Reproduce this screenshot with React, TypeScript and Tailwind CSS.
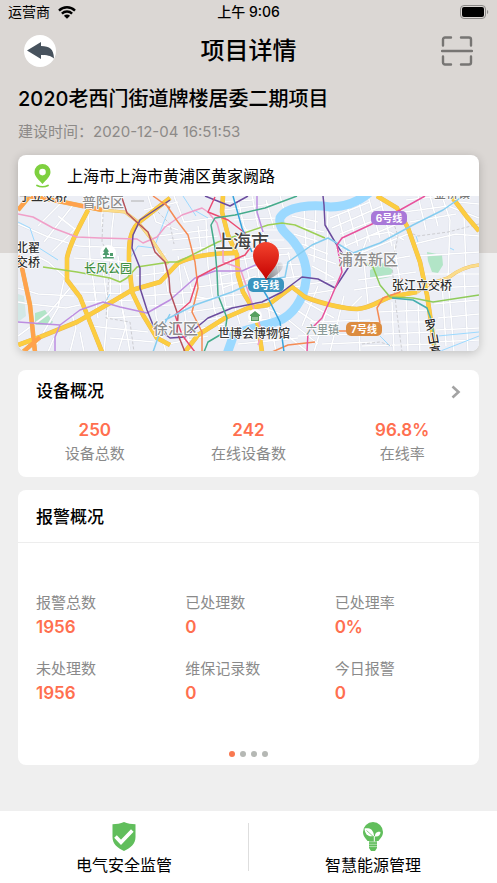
import { useState } from 'react';

interface Stat {
  label: string;
  value: string;
}

const deviceStats: Stat[] = [
  { label: '设备总数', value: '250' },
  { label: '在线设备数', value: '242' },
  { label: '在线率', value: '96.8%' },
];

const alarmStats: Stat[] = [
  { label: '报警总数', value: '1956' },
  { label: '已处理数', value: '0' },
  { label: '已处理率', value: '0%' },
  { label: '未处理数', value: '1956' },
  { label: '维保记录数', value: '0' },
  { label: '今日报警', value: '0' },
];

// Small streets, drawn white under everything else
const streets = [
  'M0 28L28 40L60 50M0 50L30 66L50 84M0 92L20 98L56 100M0 106L12 108L48 112L66 108M0 140L30 118L52 92M14 156L40 112L46 84',
  'M20 30L44 6M26 46L56 8M34 56L60 30M40 20L58 34M84 0V30M98 0L94 32L92 100M70 18L72 62L78 104M60 50L108 52M56 62L112 66',
  'M50 88L112 88M62 96L112 98M66 106L116 104M84 66L90 112L86 156M100 60L104 110L112 156M76 92L80 122M90 122L124 120M72 130L130 136M92 142L136 146',
  'M52 156L58 132L54 118M30 156L36 142M66 156L62 136M100 156L108 130L104 112M124 60L148 58M118 80L150 76M126 100L176 96M130 110L174 108',
  'M136 70L138 120L148 156M144 56L150 96M160 60L166 110L172 156M130 0L138 26L160 34M126 14L160 6M156 0L166 26L196 22M140 40L190 34',
  'M150 44L200 40M154 54L204 50M166 70L176 100L196 104M172 92L220 86M176 104L226 98M170 116L214 110M176 126L212 120M164 136L206 128M150 148L190 140',
  'M180 30L184 62M188 24L190 70L196 112L204 142M202 76L208 112M212 62L216 108L222 128M226 58L232 86M238 56L242 88M206 66L246 60M202 80L244 70M204 92L238 80',
  'M220 4L226 30L238 52M234 0L240 30L262 60M196 6L236 4M206 14L254 8M216 24L258 22M222 34L262 34M224 44L266 44M230 54L274 52M248 4L256 32M262 0L266 14',
  'M246 60L272 58M248 70L284 68M252 84L282 80M256 94L282 90M258 60L262 88M270 56L276 82M242 110L262 118M230 126L258 122M228 136L262 134M220 148L280 142M250 110L258 156',
  'M274 20L300 26M270 28L306 36M276 38L302 46M284 48L310 58M290 58L318 68M294 70L316 82M286 12L288 50M298 10L296 66M310 14L308 84M292 88L318 84M290 98L316 94',
  'M284 104L316 122M276 112L308 134M268 122L300 148M262 134L290 156M300 90L284 130M314 96L296 156M326 100L312 156M280 140L340 138M292 126L352 124M304 148L356 146',
  'M312 22L352 6M314 32L364 10M322 38L372 18M318 54L384 26M330 62L390 38M328 6L340 50M340 4L352 46M350 0L362 42M362 2L374 50M320 18L330 60M344 56L350 40L372 36L386 44',
  'M336 70L392 60M340 84L398 76M336 94L362 90M346 66L350 108M376 48L384 98M330 114L344 100M388 4L424 0M386 16L430 10M392 26L438 18M400 0L408 34M412 0L420 30M424 0L432 24',
  'M396 48L438 38L461 40M400 60L461 56M432 24L430 84L436 156M446 20L448 72M440 6L461 8M430 10L461 22M404 78L461 78M414 92L461 90M416 108L461 104M420 122L461 118',
  'M418 134L461 132M414 146L461 144M446 76L450 156M360 116L410 114M352 126L412 126M366 138L414 136M344 150L416 148M374 106L376 156M388 100L390 156M400 106L402 156M340 116L342 156M424 86L428 150',
];

const boundaries = [
  'M85 18L84 46L92 62L88 122L112 126L116 156',
  'M372 16L380 40L374 70L378 110L384 156M390 36L400 40L430 36L461 28M140 16L152 28L156 48M344 148L362 146L374 150',
];

const parks = [
  'M409 56L424 59L425 69L420 77L414 76L410 65Z',
  'M352 74L365 67L375 74L372 81L362 83L352 81Z',
  'M17 117L27 114L35 126L32 129H17Z',
];

const highways: { d: string; color: string; width: number }[] = [
  { d: 'M84 14L107 16L120 26L134 44L150 68', color: '#fbdc8a', width: 2.5 },
  { d: 'M399 96C412 86 424 84 430 82C440 74 450 70 461 69', color: '#fbdc8a', width: 3 },
  { d: 'M70 14C62 30 52 46 49 62L49 84L62 101L70 121L84 156', color: '#fccd40', width: 4 },
  { d: 'M0 149L22 141L59 126L92 107L114 94L142 86L160 67C176 59 200 57 220 57', color: '#fccd40', width: 4 },
  { d: 'M152 2L120 27C110 38 111 52 111 66L114 96L125 119L139 142L152 149', color: '#fccd40', width: 4 },
  { d: 'M205 0L204 16L210 39L219 59L220 79L225 96L234 111L240 129L244 156', color: '#fccd40', width: 4 },
  { d: 'M167 156L180 139L207 122L230 112L250 109L274 91L287 101C302 107 326 113 339 113C354 112 362 104 372 101L399 96', color: '#fccd40', width: 4 },
  { d: 'M359 0L379 12L390 32L402 66L409 99L412 119L417 156', color: '#fccd40', width: 4 },
  { d: 'M434 1L449 21L461 35', color: '#fccd40', width: 4 },
  { d: 'M0 14L10 2M10 0L35 4L84 14', color: '#ffa24c', width: 4 },
  { d: 'M0 60L4 72L12 109L17 156M5 156L22 141', color: '#ffa24c', width: 4 },
];

const metroLines: { d: string; color: string }[] = [
  { d: 'M0 18L15 21L35 32L59 41L82 42L119 43L125 47L139 41L147 31L164 19L184 12L190 16L199 27L205 49V66L222 72L229 92L237 116L244 136L240 149', color: '#f09fc8' },
  { d: 'M25 71L59 76L92 82L102 86L109 82L119 71L152 66L160 66L200 46L250 29L264 27L277 29L307 42', color: '#9ccf55' },
  { d: 'M0 126L42 129L62 114L85 106L102 111L129 117L152 104L177 82L197 75H224L244 66M42 129L37 141V156M239 0V16L245 36', color: '#bd8de0' },
  { d: 'M152 4L122 24L115 39L114 52L122 72V92L129 114L135 129L152 142L167 141L190 122L214 112L244 106L264 96L284 81L300 83L317 92L332 69L317 46L307 29L306 9L305 0M187 0L212 10L230 0', color: '#6b4c9e' },
  { d: 'M104 2L109 17L122 29L130 36L137 56L147 66L151 82L152 96L160 119L159 136L167 156', color: '#b5525c' },
  { d: 'M135 0L152 12M147 7L160 26L170 39L177 66L180 92L174 116L184 136V156M384 82L382 96L365 102L359 112L362 127M318 135H332M254 156L270 149L297 146', color: '#f58b54' },
  { d: 'M197 1L190 16L210 24L227 37L232 52L227 59L197 72L180 81L172 106L157 119L164 139L177 156', color: '#ea4c72' },
  { d: 'M279 0L247 12L217 19L197 22L193 29L197 52L199 76L200 99L209 122L207 136L190 146L186 156', color: '#45ab8b' },
  { d: 'M215 0L224 32L234 56M244 92L250 102L262 126L266 156', color: '#36a3dc' },
  { d: 'M147 124L177 109L214 96L234 87L267 81L270 66L294 49L310 42L317 46L335 57L362 47L395 29L425 14L445 0M152 118L142 136L135 156', color: '#86cdf0' },
  { d: 'M407 0L382 14L352 29L324 42L319 49L324 76L312 104L304 122L290 136L289 156', color: '#e8529c' },
  { d: 'M340 64L355 71L362 89L372 101L395 102L415 106L461 99', color: '#8fcb5a' },
  { d: 'M374 102L395 104L409 112L414 126L418 156', color: '#45aeb0' },
];

function MapView() {
  return (
    <svg
      viewBox="0 0 461 155"
      preserveAspectRatio="xMidYMid slice"
      className="block w-full font-['Inter','Noto_Sans_CJK_SC',sans-serif]"
      role="img"
      aria-label="项目位置地图"
    >
      <defs>
        <linearGradient id="marker" x1="0" y1="0" x2="0" y2="1">
          <stop offset="0" stopColor="#f4442e" />
          <stop offset="1" stopColor="#c40000" />
        </linearGradient>
        <linearGradient id="markerShade" x1="0" y1="1" x2="1" y2="0">
          <stop offset="0" stopColor="#000" stopOpacity="0.5" />
          <stop offset="1" stopColor="#000" stopOpacity="0.02" />
        </linearGradient>
      </defs>
      <rect width="461" height="155" fill="#eceef5" />

      {/* Parks and water */}
      <path d="M0 98L6 100L8 120L0 126Z" fill="#d3e8e6" />
      {parks.map((d) => (
        <path key={d} d={d} fill="#b2e5c7" />
      ))}
      <g fill="none" stroke="#d5d9e4" strokeWidth="2.2">
        {streets.map((d) => (
          <path key={d} d={d} />
        ))}
      </g>
      <g fill="none" stroke="#fff" strokeWidth="1.6">
        {streets.map((d) => (
          <path key={d} d={d} />
        ))}
      </g>
      <g fill="none" stroke="#9bd9ff">
        <path d="M352 -4C338 8 325 11 312 11C296 8 268 10 262 22C260 34 270 38 276 46C286 58 290 74 288 84C286 104 274 120 260 125C246 130 226 134 216 138L209 158" strokeWidth="9" strokeLinejoin="round" />
        <path d="M0 26L12 32L18 50L40 64M112 62L120 50L136 52L142 36L152 10M165 0L178 20M176 14L190 22M420 156L461 140M420 140L461 136M86 108L92 98M372 150L362 140M398 40L400 46M432 52L436 54M340 130L346 126" strokeWidth="1" />
      </g>
      <g fill="none" stroke="#c4c4c8" strokeWidth="0.8" strokeDasharray="3 2">
        {boundaries.map((d) => (
          <path key={d} d={d} />
        ))}
      </g>
      <g fill="none" strokeLinejoin="round">
        {highways.map((road) => (
          <path key={road.d} d={road.d} stroke="#e6b65c" strokeWidth={road.width + 0.6} />
        ))}
        {highways.map((road) => (
          <path key={road.d} d={road.d} stroke={road.color} strokeWidth={road.width} />
        ))}
        {metroLines.map((line) => (
          <path key={line.d} d={line.d} stroke={line.color} strokeWidth="1.5" />
        ))}
      </g>

      {/* Points of interest */}
      <circle cx="90" cy="57" r="8" fill="#fff" />
      <path d="M88 51l3 4.500l-1.500.5l2 3h-2.700v2h7v1.400H85v-1.400h2.200v-2h-2.700l2-3l-1.500-.5zM92 57h3v3h-3z" fill="#4d9b6c" />
      <circle cx="237" cy="120" r="7" fill="#fff" />
      <path d="M232 119l5-4 5 4v1h-10zM233 120h8v5h-8z" fill="#57a05f" />
      <path d="M235 121v3M237 121v3M239 121v3" stroke="#fff" strokeWidth="0.7" />

      {/* Labels get a white halo so they stay readable over the roads */}
      <g stroke="#fff" strokeWidth="1.5" strokeLinejoin="round" paintOrder="stroke" className="font-medium">
        <text x="1" y="5" fontSize="12" fill="#2f2f2f">于立交桥</text>
        <text x="-2" y="56" fontSize="12" fill="#2f2f2f">北翟</text>
        <text x="-2" y="71" fontSize="12" fill="#2f2f2f">交桥</text>
        <text x="64" y="11" fontSize="14" fill="#8d8d8d">普陀区</text>
        <path d="M113 5h13" stroke="#b0b0b0" strokeWidth="1" />
        <text x="66" y="77" fontSize="12" fill="#3f8f45">长风公园</text>
        <text x="135" y="138" fontSize="15" fill="#8d8d8d">徐汇区</text>
        <text x="197" y="52" fontSize="18" fill="#444">上海市</text>
        <text x="200" y="142" fontSize="12" fill="#3c3c3c">世博会博物馆</text>
        <text x="320" y="69" fontSize="15" fill="#8d8d8d">浦东新区</text>
        <text x="374" y="94" fontSize="12" fill="#2f2f2f">张江立交桥</text>
        <text x="288" y="138" fontSize="11" fill="#8a9a98">六里镇</text>
        <text x="416" y="2" fontSize="12" fill="#777">金桥镇</text>
        <g transform="rotate(-10 413 130)">
          <text x="407" y="133" fontSize="12" fill="#222">罗</text>
          <text x="407" y="147" fontSize="12" fill="#222">山</text>
          <text x="407" y="160" fontSize="12" fill="#222">高</text>
        </g>
      </g>

      <g fontSize="10" fill="#fff" textAnchor="middle" className="font-bold">
        <rect x="353" y="15" width="36" height="14" rx="5" fill="#a878d8" />
        <text x="371" y="26">6号线</text>
        <rect x="328" y="126" width="36" height="14" rx="5" fill="#dc8c40" />
        <text x="346" y="137">7号线</text>
        <rect x="230" y="82" width="36" height="14" rx="5" fill="#3a94bf" />
        <text x="248" y="93">8号线</text>
      </g>

      {/* Marker with its shadow */}
      <path d="M248 84L257 69C262 64 267 66 264 73C260 79 254 82 248 84Z" fill="url(#markerShade)" />
      <path d="M248 84C245 76 235 70 235 59a13 13 0 0 1 26 0C261 70 251 76 248 84Z" fill="url(#marker)" />
    </svg>
  );
}

function StatusBar() {
  return (
    <div className="flex h-6 items-center justify-between px-2">
      <div className="flex flex-1 items-center gap-2 text-sm">
        <span>运营商</span>
        <svg viewBox="0 0 18 13" className="h-[13px] w-[18px]" fill="none" stroke="#000" strokeWidth="2.4">
          <path d="M1 4.6a11.4 11.4 0 0 1 16 0M3.9 7.6a7.3 7.3 0 0 1 10.2 0" />
          <path d="M9 12.8L5.9 9.8a4.6 4.6 0 0 1 6.2 0z" fill="#000" stroke="none" />
        </svg>
      </div>
      <span className="text-sm font-medium">上午 9:06</span>
      <div className="flex flex-1 justify-end">
        <svg viewBox="0 0 29 14" className="h-[14px] w-[29px]">
          <rect x="0.5" y="0.5" width="25" height="13" rx="3.5" fill="none" stroke="#8b8987" />
          <rect x="2" y="2" width="22" height="10" rx="2" />
          <path d="M27 5c1.6.4 1.6 3.6 0 4z" fill="#8b8987" />
        </svg>
      </div>
    </div>
  );
}

function ShieldIcon() {
  return (
    <svg viewBox="0 0 24 29" className="h-[29px] w-6">
      <path d="M12 0c3.500 1.700 7.500 2.200 11.500 2.200V15c0 7-5 11-11.500 14C5.500 26 .5 22 .5 15V2.200C4.500 2.200 8.500 1.700 12 0z" fill="#61be5c" />
      <path d="M3.500 14.500L9 20.300L20.300 8.500" fill="none" stroke="#fff" strokeWidth="3.600" />
    </svg>
  );
}

function BulbIcon() {
  return (
    <svg viewBox="0 0 20 29" className="h-[29px] w-5">
      <path d="M10 0a10 10 0 0 1 10 10c0 4.500-3 6.500-4.500 9H4.500C3 16.500 0 14.500 0 10A10 10 0 0 1 10 0z" fill="#61be5c" />
      <path d="M6 18h8v8l-2 3H8l-2-3z" fill="#61be5c" />
      <path d="M5 19.800h10M6 22.300h8M6 24.600h8" stroke="#fff" strokeWidth="0.500" />
      <path d="M1.500 6.500c4-.8 9 0 9.500 7.500C5 15.500 2 12 1.500 6.500z" fill="#fff" />
      <path d="M12 14.500c-.4-3 2-5.500 5.500-4.500 0 3-2 5-5.500 4.500z" fill="#fff" />
      <path d="M3.500 8.500l7.300 6.500" stroke="#61be5c" strokeWidth="0.700" />
      <path d="M11.300 14v5.500" stroke="#fff" strokeWidth="1" />
    </svg>
  );
}

export default function App() {
  const [page, setPage] = useState(0);

  return (
    <div className="flex min-h-screen flex-col bg-[#efefef] font-['Inter','Noto_Sans_CJK_SC',sans-serif] text-black">
      <header className="bg-[#dbd7d4] pb-[109px]">
        <StatusBar />
        <div className="flex h-[53px] items-center justify-between px-6">
          <button aria-label="返回" className="flex h-8 w-8 items-center justify-center rounded-full bg-white">
            <svg viewBox="0 0 27 17" className="h-[17px] w-[27px] shrink-0">
              <path d="M0 8.500L14 0v4c9 .5 12.500 2.500 13 12.500-3.500-3-7-3.500-13-3.500v4z" fill="#47525d" />
            </svg>
          </button>
          <h1 className="text-2xl font-medium">项目详情</h1>
          <button aria-label="扫一扫">
            <svg viewBox="0 0 32 30" className="h-[30px] w-8" fill="none" stroke="#777573" strokeWidth="2.400" strokeLinecap="round">
              <path d="M2 9.500V3.500a2 2 0 0 1 2-2h6M20 1.500h8a2 2 0 0 1 2 2v6M30 20.500v6a2 2 0 0 1-2 2h-8M10 28.500H4a2 2 0 0 1-2-2v-6M1 15h30" />
            </svg>
          </button>
        </div>
        <div className="px-[18px] pt-2">
          <h2 className="text-xl leading-7 font-medium">2020老西门街道牌楼居委二期项目</h2>
          <p className="mt-[7px] text-[15px] leading-6 text-[#8d8a88]">建设时间：2020-12-04 16:51:53</p>
        </div>
      </header>

      <main className="-mt-[98px] flex flex-1 flex-col px-[18px]">
        <section className="overflow-hidden rounded-lg bg-white shadow-[0_2px_10px_rgba(0,0,0,0.2)]">
          <div className="flex h-[41px] items-center gap-4 pl-4">
            <svg viewBox="0 0 17 24" className="h-6 w-[17px]">
              <path d="M8.500 0a8 8 0 0 1 8 8c0 4.500-4.500 8-8 12C5 16 .5 12.500.5 8a8 8 0 0 1 8-8zm0 4.800a3.300 3.300 0 1 0 0 6.600 3.300 3.300 0 0 0 0-6.600z" fill="#7ed03f" fillRule="evenodd" />
              <path d="M3 21.500c3 1.500 8 1.500 11 0" fill="none" stroke="#7ed03f" strokeWidth="1.800" strokeLinecap="round" />
            </svg>
            <span className="text-base">上海市上海市黄浦区黄家阙路</span>
          </div>
          <MapView />
        </section>

        <section className="mt-[19px] rounded-lg bg-white pb-[11px]">
          <div className="flex h-[43px] items-center justify-between px-[18px]">
            <h3 className="text-[17px] font-medium">设备概况</h3>
            <button aria-label="查看设备">
              <svg viewBox="0 0 10 14" className="h-3.5 w-2.5" fill="none" stroke="#a3a3a3" strokeWidth="2.600">
                <path d="M1.500 1.500L7.500 7L1.500 12.500" />
              </svg>
            </button>
          </div>
          <dl className="grid grid-cols-3 pt-[5px] text-center">
            {deviceStats.map((stat) => (
              <div key={stat.label} className="flex flex-col-reverse">
                <dt className="text-[15px] leading-6 text-[#8a8a8a]">{stat.label}</dt>
                <dd className="text-[17px] leading-6 font-semibold text-[#ff6f4f]">{stat.value}</dd>
              </div>
            ))}
          </dl>
        </section>

        <section className="mt-[13px] rounded-lg bg-white pb-2">
          <div className="flex h-[53px] items-center border-b border-[#ededed] px-[18px] pt-[3px]">
            <h3 className="text-[17px] font-medium">报警概况</h3>
          </div>
          <dl className="grid grid-cols-3 gap-x-[5px] gap-y-[18px] pt-12 pl-[18px]">
            {alarmStats.map((stat) => (
              <div key={stat.label}>
                <dt className="text-[15px] leading-6 text-[#8a8a8a]">{stat.label}</dt>
                <dd className="text-[17px] leading-6 font-semibold text-[#ff6f4f]">{stat.value}</dd>
              </div>
            ))}
          </dl>
          <div className="mt-[46px] flex justify-center gap-[5px]">
            {[0, 1, 2, 3].map((i) => (
              <button
                key={i}
                aria-label={`第${i + 1}页`}
                onClick={() => setPage(i)}
                className={`h-1.5 w-1.5 rounded-full ${page === i ? 'bg-[#f97850]' : 'bg-[#b5b8b4]'}`}
              />
            ))}
          </div>
        </section>
      </main>

      <nav className="flex h-[72px] items-center bg-white">
        <a href="#safety" className="flex flex-1 flex-col items-center pt-1.5">
          <ShieldIcon />
          <span className="text-base leading-7">电气安全监管</span>
        </a>
        <div className="h-12 w-px bg-[#dedede]" />
        <a href="#energy" className="flex flex-1 flex-col items-center pt-1.5">
          <BulbIcon />
          <span className="text-base leading-7">智慧能源管理</span>
        </a>
      </nav>
    </div>
  );
}
